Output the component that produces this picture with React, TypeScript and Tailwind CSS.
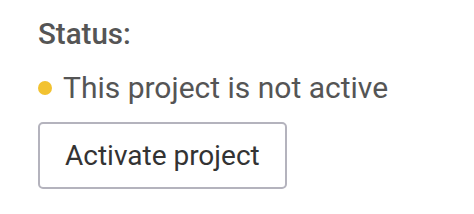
export default function App() {
  return (
    <div className="min-h-screen bg-white pl-[38px] pt-[17px]" style={{ fontFamily: 'Roboto, "Liberation Sans", sans-serif' }}>
      <div className="text-[29.5px] leading-[34px] font-medium text-[#555555]">Status:</div>
      <div className="mt-[19px] flex items-center gap-[11px] text-[30px] leading-[36px] text-[#555555]">
        <span className="h-[14px] w-[14px] rounded-full bg-[#f2c230]" />
        <span>This project is not active</span>
      </div>
      <button
        type="button"
        className="mt-[16px] h-[67px] rounded-[5px] border-2 border-[#b4b3bd] bg-white px-[25px] text-[28px] leading-[63px] text-[#333333]"
      >
        Activate project
      </button>
    </div>
  )
}
